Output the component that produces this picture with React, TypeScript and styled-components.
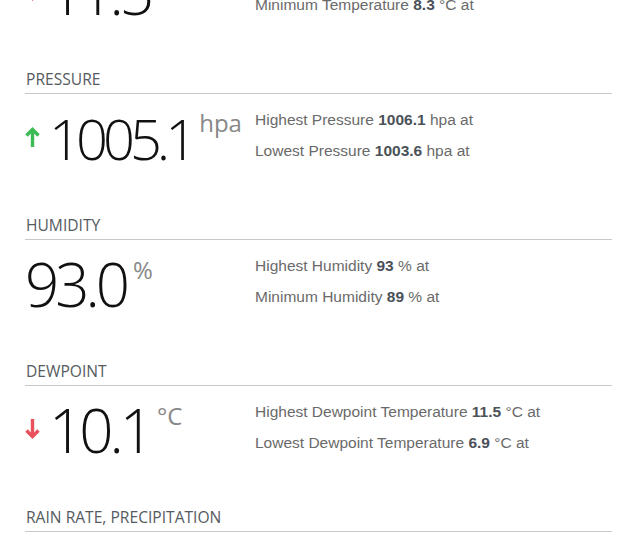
import { ReactElement } from 'react';
import styled, { createGlobalStyle } from 'styled-components';

type Trend = 'up' | 'down' | 'none';

interface Reading {
  title: string;
  value: string;
  unit: string;
  trend: Trend;
  lines: { label: string; value: string; unit: string }[];
}

const readings: Reading[] = [
  {
    title: 'Temperature',
    value: '11.5',
    unit: '°C',
    trend: 'down',
    lines: [
      { label: 'Highest Temperature', value: '12.4', unit: '°C' },
      { label: 'Minimum Temperature', value: '8.3', unit: '°C' },
    ],
  },
  {
    title: 'Pressure',
    value: '1005.1',
    unit: 'hpa',
    trend: 'up',
    lines: [
      { label: 'Highest Pressure', value: '1006.1', unit: 'hpa' },
      { label: 'Lowest Pressure', value: '1003.6', unit: 'hpa' },
    ],
  },
  {
    title: 'Humidity',
    value: '93.0',
    unit: '%',
    trend: 'none',
    lines: [
      { label: 'Highest Humidity', value: '93', unit: '%' },
      { label: 'Minimum Humidity', value: '89', unit: '%' },
    ],
  },
  {
    title: 'Dewpoint',
    value: '10.1',
    unit: '°C',
    trend: 'down',
    lines: [
      { label: 'Highest Dewpoint Temperature', value: '11.5', unit: '°C' },
      { label: 'Lowest Dewpoint Temperature', value: '6.9', unit: '°C' },
    ],
  },
  {
    title: 'Rain rate, precipitation',
    value: '0.0',
    unit: 'mm/h',
    trend: 'none',
    lines: [
      { label: 'Highest Rain Rate', value: '0.0', unit: 'mm/h' },
      { label: 'Precipitation', value: '0.0', unit: 'mm' },
    ],
  },
];

const GlobalStyle = createGlobalStyle`
  html, body {
    margin: 0;
    padding: 0;
    background: #fff;
    overflow: hidden;
  }
`;

// the screenshot is a scrolled view: the temperature block sits mostly above the fold
const Page = styled.div`
  margin-top: -77px;
  padding: 0 20px 0 25px;
`;

const Section = styled.section`
  display: flex;
  flex-direction: column;
`;

const Heading = styled.h2`
  margin: 0;
  padding: 0 0 4px 1px;
  border-bottom: 1px solid #c8c8c8;
  font-family: 'Open Sans', sans-serif;
  font-size: 15.6px;
  font-weight: 400;
  line-height: 20px;
  color: #555b60;
  text-transform: uppercase;
`;

const Row = styled.div`
  display: flex;
  align-items: flex-start;
  height: 121px;
  box-sizing: border-box;
  padding-top: 10px;
`;

const ValueColumn = styled.div`
  display: flex;
  align-items: center;
  gap: 9px;
  width: 230px;
  height: 60px;
  margin-top: 4px;
`;

// long readings (e.g. pressure) are drawn a little tighter so they fit the column
const BigValue = styled.div<{ $long: boolean }>`
  font-family: 'Open Sans', sans-serif;
  font-weight: 300;
  font-size: ${({ $long }) => ($long ? '56px' : '60px')};
  letter-spacing: ${({ $long }) => ($long ? '-5px' : '-4px')};
  line-height: 60px;
  color: #111;
  white-space: nowrap;
`;

const Unit = styled.span`
  font-family: 'Open Sans', sans-serif;
  font-weight: 400;
  font-size: 24px;
  letter-spacing: 0;
  line-height: 0;
  color: #888;
  margin-left: 7px;
  vertical-align: 28px;
`;

const Details = styled.div`
  display: flex;
  flex-direction: column;
`;

const DetailLine = styled.div`
  font-family: 'Liberation Sans', Arial, sans-serif;
  font-size: 15.5px;
  line-height: 31px;
  color: #6a6a6a;
`;

const DetailValue = styled.b`
  color: #4a5158;
`;

const ArrowIcon = styled.svg<{ $trend: Trend }>`
  flex: none;
  width: 15px;
  height: 20px;
  margin-top: -2px;
  color: ${({ $trend }) => ($trend === 'up' ? '#3cba54' : '#e9505d')};
`;

function Arrow({ trend }: { trend: Trend }): ReactElement | null {
  if (trend === 'none') return null;
  const up = trend === 'up';
  return (
    <ArrowIcon $trend={trend} viewBox="0 0 15 20" fill="none" stroke="currentColor" strokeWidth={3.4}>
      {up ? (
        <>
          <path d="M7.5 3 V20" />
          <path d="M1.5 8.5 L7.5 2.5 L13.5 8.5" />
        </>
      ) : (
        <>
          <path d="M7.5 0 V17" />
          <path d="M1.5 11.5 L7.5 17.5 L13.5 11.5" />
        </>
      )}
    </ArrowIcon>
  );
}

export default function App(): ReactElement {
  return (
    <>
      <GlobalStyle />
      <Page>
        {readings.map((r) => (
          <Section key={r.title}>
            <Heading>{r.title}</Heading>
            <Row>
              <ValueColumn>
                <Arrow trend={r.trend} />
                <BigValue $long={r.value.length > 4}>
                  {r.value}
                  <Unit>{r.unit}</Unit>
                </BigValue>
              </ValueColumn>
              <Details>
                {r.lines.map((l) => (
                  <DetailLine key={l.label}>
                    {l.label} <DetailValue>{l.value}</DetailValue> {l.unit} at
                  </DetailLine>
                ))}
              </Details>
            </Row>
          </Section>
        ))}
      </Page>
    </>
  );
}
